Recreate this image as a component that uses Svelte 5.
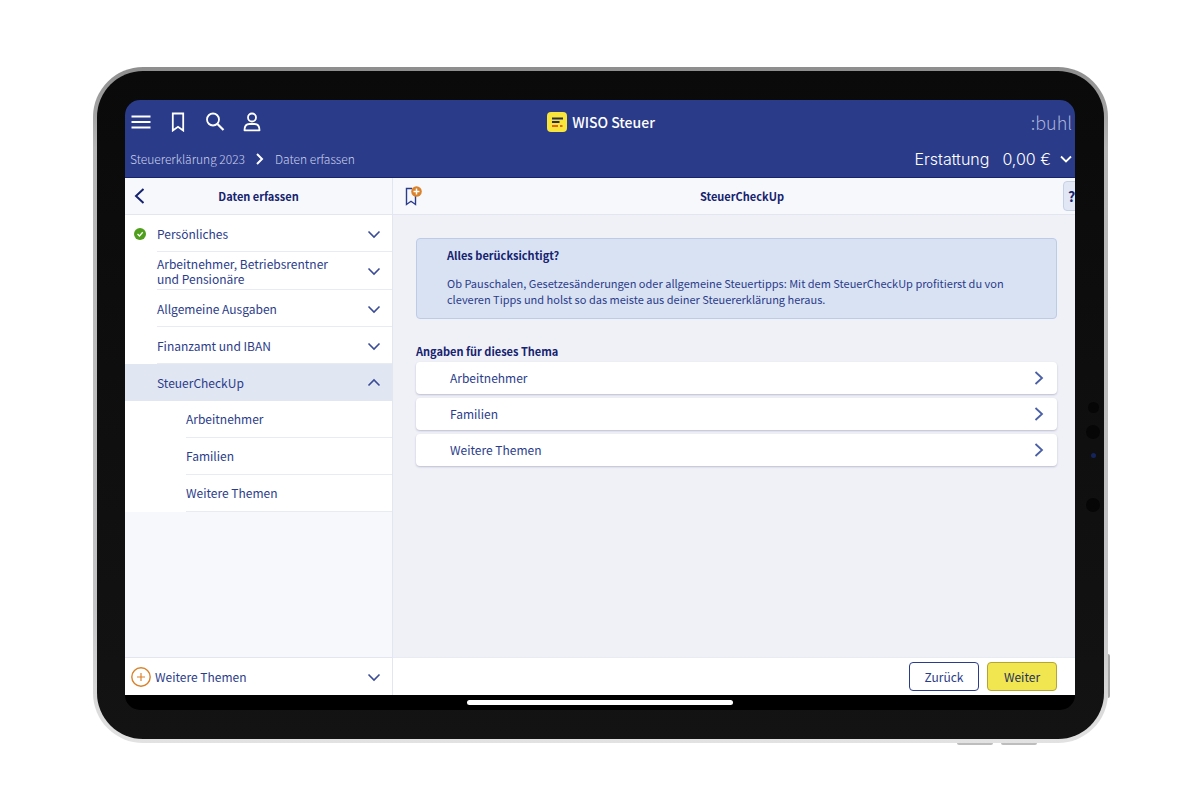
<script lang="ts">
  type Topic = { label: string; done?: boolean; children?: string[] };

  const topics: Topic[] = [
    { label: "Persönliches", done: true },
    { label: "Arbeitnehmer, Betriebsrentner und Pensionäre" },
    { label: "Allgemeine Ausgaben" },
    { label: "Finanzamt und IBAN" },
    { label: "SteuerCheckUp", children: ["Arbeitnehmer", "Familien", "Weitere Themen"] },
  ];

  let open = $state("SteuerCheckUp");

  function toggle(label: string) {
    open = open === label ? "" : label;
  }
</script>

{#snippet chevron(up: boolean)}
  <svg class="chevron" class:up width="14" height="14" viewBox="0 0 14 14">
    <path d="M1.500 4.500 7 10l5.500-5.500" />
  </svg>
{/snippet}

<div class="page">
  <div class="device">
    <div class="bezel">
      <div class="screen">
        <header>
          <div class="toolbar">
            <div class="tools">
              <button aria-label="Menü">
                <svg width="20" height="20" viewBox="0 0 20 20"><path d="M.5 4.500h19M.5 10h19M.5 15.500h19" /></svg>
              </button>
              <button aria-label="Lesezeichen">
                <svg width="20" height="20" viewBox="0 0 20 20"><path d="M4.800 1.500h10.400v17L10 14.800l-5.200 3.700z" /></svg>
              </button>
              <button aria-label="Suche">
                <svg width="20" height="20" viewBox="0 0 20 20"><circle cx="8" cy="7.500" r="6" /><path d="m12.500 12 6 6" stroke-width="2.200" /></svg>
              </button>
              <button aria-label="Profil">
                <svg width="20" height="20" viewBox="0 0 20 20">
                  <circle cx="10" cy="5.500" r="4" />
                  <path d="M2.500 18.300c0-4.500 2-6.300 5-6.300h5c3 0 5 1.800 5 6.300z" stroke-linejoin="round" />
                </svg>
              </button>
            </div>
            <div class="brand">
              <svg width="20" height="20" viewBox="0 0 20 20">
                <rect width="20" height="20" rx="4" fill="#f7e53b" />
                <path d="M5 6.500h11M5 10h7.500" stroke="#2b2f45" stroke-width="1.800" />
                <path d="M5 14h6M13 14h2.500" stroke="#e0641e" stroke-width="1.800" />
              </svg>
              <span>WISO Steuer</span>
            </div>
            <div class="vendor">:buhl</div>
          </div>
          <div class="crumbs">
            <nav>
              <a href="#start">Steuererklärung 2023</a>
              <svg width="8" height="12" viewBox="0 0 8 12"><path d="m1 1 5 5-5 5" /></svg>
              <a href="#daten">Daten erfassen</a>
            </nav>
            <button class="refund">
              <span>Erstattung</span>
              <span>0,00 €</span>
              <svg width="12" height="8" viewBox="0 0 12 8"><path d="m1 1.500 5 5 5-5" /></svg>
            </button>
          </div>
        </header>

        <div class="body">
          <aside>
            <div class="panel-head">
              <button class="back" aria-label="Zurück">
                <svg width="11" height="16" viewBox="0 0 11 16"><path d="M9.500 1 2 8l7.500 7" /></svg>
              </button>
              <h2>Daten erfassen</h2>
            </div>
            <ul class="topics">
              {#each topics as topic}
                <li>
                  <button class="topic" class:active={open === topic.label} onclick={() => toggle(topic.label)}>
                    <span class="state">
                      {#if topic.done}
                        <svg width="12" height="12" viewBox="0 0 12 12">
                          <circle cx="6" cy="6" r="6" fill="#4f9f1c" />
                          <path d="m3.500 6 2 2 3.200-3.700" stroke="#fff" stroke-width="1.300" fill="none" />
                        </svg>
                      {/if}
                    </span>
                    <span class="line">
                      <span class="name">{topic.label}</span>
                      {@render chevron(open === topic.label)}
                    </span>
                  </button>
                  {#if topic.children && open === topic.label}
                    <ul class="children">
                      {#each topic.children as child}
                        <li><a href="#{child}">{child}</a></li>
                      {/each}
                    </ul>
                  {/if}
                </li>
              {/each}
            </ul>
            <button class="more">
              <svg width="20" height="20" viewBox="0 0 20 20" fill="none" stroke="#d9822b">
                <circle cx="10" cy="10" r="9.200" stroke-width="1.400" />
                <path d="M10 6v8M6 10h8" stroke-width="1.200" />
              </svg>
              <span>Weitere Themen</span>
              {@render chevron(false)}
            </button>
          </aside>

          <main>
            <div class="panel-head wide">
              <button class="mark" aria-label="Lesezeichen hinzufügen">
                <svg width="18" height="20" viewBox="0 0 18 20">
                  <path d="M8 2.500H2.500v16L7 15.300l4.500 3.200V10" fill="none" stroke="#2b3c8a" stroke-width="1.400" />
                  <circle cx="12.500" cy="5.500" r="5.300" fill="#d9822b" />
                  <path d="M12.500 2.500v6M9.500 5.500h6" stroke="#fff" stroke-width="1.500" />
                </svg>
              </button>
              <h2>SteuerCheckUp</h2>
              <button class="help" aria-label="Hilfe">?</button>
            </div>
            <div class="content">
              <section class="info">
                <h3>Alles berücksichtigt?</h3>
                <p>
                  Ob Pauschalen, Gesetzesänderungen oder allgemeine Steuertipps: Mit dem SteuerCheckUp profitierst du von
                  cleveren Tipps und holst so das meiste aus deiner Steuererklärung heraus.
                </p>
              </section>
              <h3>Angaben für dieses Thema</h3>
              <ul class="cards">
                {#each topics[4].children ?? [] as child}
                  <li>
                    <a href="#{child}">
                      {child}
                      <svg width="10" height="14" viewBox="0 0 10 14"><path d="m1.500 1 6.500 6-6.500 6" /></svg>
                    </a>
                  </li>
                {/each}
              </ul>
            </div>
            <footer>
              <button class="action">Zurück</button>
              <button class="action primary">Weiter</button>
            </footer>
          </main>
        </div>
        <div class="home"><span></span></div>
      </div>
    </div>
    <div class="sensors"><i></i><i></i><i></i><i></i></div>
    <div class="volume"><i></i><i></i></div>
    <div class="power"></div>
  </div>
</div>

<style>
  :global(body) {
    background: #fff;
  }

  .page {
    box-sizing: border-box;
    display: flex;
    min-height: 100vh;
    padding: 67px 92px 57px 93px;
    font-family: "Noto Sans CJK SC", "Noto Sans", sans-serif;
    font-size: 12px;
    line-height: 16px;
    color: #2b3c8a;
  }

  .page * {
    box-sizing: border-box;
  }

  button {
    padding: 0;
    border: 0;
    background: none;
    font: inherit;
    color: inherit;
    cursor: pointer;
  }

  a {
    color: inherit;
    text-decoration: none;
  }

  ul {
    margin: 0;
    padding: 0;
    list-style: none;
  }

  h2,
  h3,
  p {
    margin: 0;
    font-size: 11px;
  }

  h2,
  h3 {
    font-weight: 700;
    color: #16236f;
  }

  svg {
    display: block;
    flex: none;
  }

  /* Tablet frame */
  .device {
    position: relative;
    flex: 1;
    display: flex;
    min-width: 0;
    padding: 4px;
    border-radius: 50px;
    background: linear-gradient(#8e8e8e, #b5b5b5 12%, #c4c4c6 80%, #e2e2e2);
  }

  .bezel {
    flex: 1;
    display: flex;
    min-width: 0;
    padding: 29px 29px 29px 28px;
    border-radius: 46px;
    background: linear-gradient(#0a0a0a, #131313);
  }

  .screen {
    flex: 1;
    display: flex;
    flex-direction: column;
    min-width: 0;
    border-radius: 15px;
    overflow: hidden;
    background: #000;
  }

  /* Blue header */
  header {
    padding: 0 3px 0 5px;
    border-bottom: 1px solid #17246c;
    background: #2a3b8a;
    color: #fff;
  }

  .toolbar {
    display: grid;
    grid-template-columns: 1fr auto 1fr;
    align-items: center;
    height: 43px;
  }

  .tools {
    display: flex;
    gap: 17px;
    padding-left: 1px;
  }

  header svg {
    fill: none;
    stroke: #fff;
    stroke-width: 1.8;
  }

  .brand {
    display: flex;
    align-items: center;
    gap: 5px;
    font-size: 14px;
    font-weight: 500;
  }

  .brand svg {
    stroke: none;
  }

  .vendor {
    justify-self: end;
    font-size: 18px;
    line-height: 24px;
    font-weight: 300;
    color: #a9b1d6;
  }

  .crumbs {
    display: flex;
    align-items: center;
    justify-content: space-between;
    height: 34px;
    padding-bottom: 2px;
  }

  .crumbs nav {
    display: flex;
    align-items: center;
    gap: 11px;
    color: #ccd2ea;
    font-weight: 300;
  }

  .crumbs nav svg {
    stroke-width: 2;
  }

  .refund {
    display: flex;
    align-items: center;
    gap: 13px;
    font-family: Inter, sans-serif;
    font-size: 16px;
    font-weight: 300;
  }

  .refund svg {
    margin-left: -4px;
  }

  /* Columns */
  .body {
    flex: 1;
    display: flex;
    min-height: 0;
  }

  aside {
    flex: none;
    display: flex;
    flex-direction: column;
    width: 268px;
    border-right: 1px solid #e3e6f0;
    background: #f7f8fc;
  }

  .panel-head {
    display: grid;
    grid-template-columns: 28px 1fr 28px;
    align-items: center;
    height: 37px;
    border-bottom: 1px solid #e3e6f0;
    background: #f7f8fc;
  }

  .panel-head h2 {
    text-align: center;
  }

  .back {
    padding-left: 9px;
  }

  .back svg {
    fill: none;
    stroke: #16236f;
    stroke-width: 2;
  }

  .chevron {
    fill: none;
    stroke: #3a4c96;
    stroke-width: 1.6;
  }

  .chevron.up {
    transform: rotate(180deg);
  }

  .topic {
    display: flex;
    width: 100%;
    min-height: 37px;
    background: #fff;
    text-align: left;
    line-height: 15px;
  }

  .topic.active {
    background: #e1e6f3;
  }

  .state {
    flex: none;
    display: flex;
    align-items: center;
    width: 32px;
    padding-left: 9px;
  }

  .line {
    flex: 1;
    align-self: stretch;
    display: flex;
    align-items: center;
    justify-content: space-between;
    padding: 4px 11px 3px 0;
    border-bottom: 1px solid #e9ebf3;
  }

  .active .line {
    border-color: transparent;
  }

  .name {
    max-width: 180px;
  }

  .children {
    background: #fff;
  }

  .children li {
    padding-left: 61px;
  }

  .children a {
    display: flex;
    align-items: center;
    height: 37px;
    border-bottom: 1px solid #e9ebf3;
  }

  .more {
    display: flex;
    align-items: center;
    gap: 4px;
    height: 38px;
    margin-top: auto;
    padding: 0 11px 0 6px;
    border-top: 1px solid #e3e6f0;
    background: #fff;
  }

  .more .chevron {
    margin-left: auto;
  }

  main {
    flex: 1;
    display: flex;
    flex-direction: column;
    min-width: 0;
    overflow: hidden;
    background: #f0f1f7;
  }

  /* The head runs past the screen edge, so the help button is cut off */
  .wide {
    margin-right: -16px;
  }

  .mark {
    padding-left: 11px;
  }

  .help {
    width: 28px;
    height: 30px;
    padding-left: 4px;
    border: 1px solid #c6d0e6;
    border-radius: 4px;
    background: #e1e7f4;
    font-size: 14px;
    font-weight: 700;
    text-align: left;
    color: #16236f;
  }

  .content {
    flex: 1;
    padding: 23px 18px 23px 23px;
  }

  .info {
    margin-bottom: 24px;
    padding: 8px 30px 11px;
    border: 1px solid #bccbe6;
    border-radius: 4px;
    background: #d9e2f3;
  }

  .info h3 {
    margin-bottom: 12px;
  }

  .cards {
    display: grid;
    gap: 4px;
    margin-top: 3px;
  }

  .cards a {
    display: flex;
    align-items: center;
    justify-content: space-between;
    height: 32px;
    padding: 0 13px 0 34px;
    border-radius: 4px;
    background: #fff;
    box-shadow: 0 1px 2px rgba(30, 40, 90, 0.25);
  }

  .cards svg {
    fill: none;
    stroke: #4a5fa5;
    stroke-width: 1.8;
  }

  footer {
    display: flex;
    align-items: center;
    justify-content: flex-end;
    gap: 8px;
    height: 38px;
    padding-right: 18px;
    border-top: 1px solid #e9ebf3;
    background: #fff;
  }

  .action {
    width: 70px;
    height: 29px;
    border: 1px solid #2b3c8a;
    border-radius: 4px;
    background: #fff;
  }

  .primary {
    border-color: #b3a634;
    background: #f1e550;
    color: #24315f;
  }

  .home {
    display: flex;
    align-items: center;
    justify-content: center;
    height: 15px;
  }

  .home span {
    width: 28%;
    height: 5px;
    border-radius: 3px;
    background: #fff;
  }

  /* Camera and hardware keys sit on the frame */
  .sensors {
    position: absolute;
    top: 335px;
    right: 8px;
    display: grid;
    justify-items: center;
    gap: 12px;
  }

  .sensors i {
    width: 14px;
    height: 14px;
    border-radius: 50%;
    background: #060606;
  }

  .sensors i:first-child {
    width: 11px;
    height: 11px;
  }

  .sensors i:nth-child(3) {
    width: 5px;
    height: 5px;
    margin-top: 2px;
    background: #14255c;
  }

  .sensors i:last-child {
    margin-top: 28px;
  }

  .volume {
    position: absolute;
    right: 71px;
    bottom: -2px;
    display: flex;
    gap: 8px;
  }

  .volume i {
    width: 36px;
    height: 2px;
    border-radius: 0 0 2px 2px;
    background: #bdbdbd;
  }

  .power {
    position: absolute;
    right: -2px;
    bottom: 45px;
    width: 2px;
    height: 44px;
    border-radius: 0 2px 2px 0;
    background: #a8a8a8;
  }
</style>
